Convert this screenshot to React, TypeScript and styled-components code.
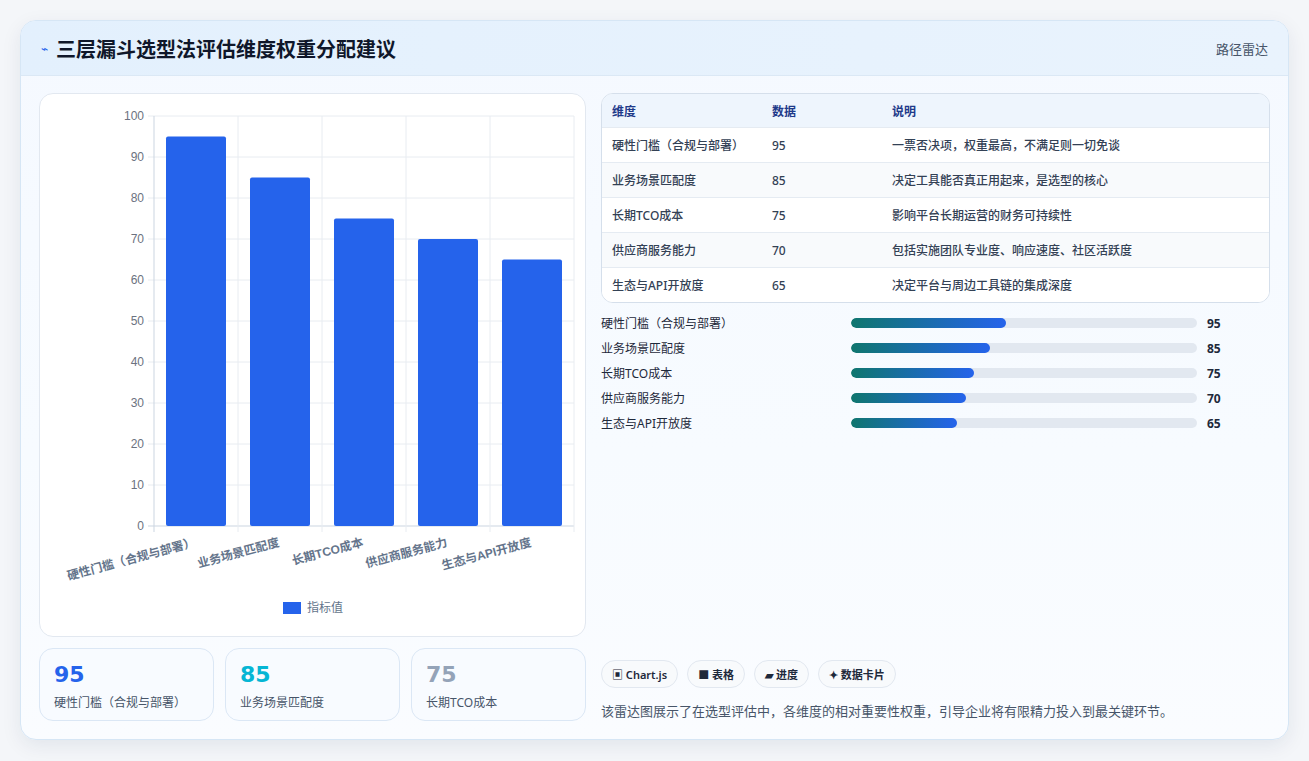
import { createGlobalStyle } from "styled-components";
import styled from "styled-components";

const GlobalStyle = createGlobalStyle`
  html, body { margin: 0; padding: 0; background: #f4f6f9; }
  body { font-family: "Noto Sans", "Noto Sans CJK SC", sans-serif; }
  * { box-sizing: border-box; }
`;

const rows = [
  { name: "硬性门槛（合规与部署）", value: 95, desc: "一票否决项，权重最高，不满足则一切免谈" },
  { name: "业务场景匹配度", value: 85, desc: "决定工具能否真正用起来，是选型的核心" },
  { name: "长期TCO成本", value: 75, desc: "影响平台长期运营的财务可持续性" },
  { name: "供应商服务能力", value: 70, desc: "包括实施团队专业度、响应速度、社区活跃度" },
  { name: "生态与API开放度", value: 65, desc: "决定平台与周边工具链的集成深度" },
];

const Page = styled.div`
  padding: 20px 20px 21px 20px;
  height: 761px;
`;

const Card = styled.div`
  height: 720px;
  border-radius: 16px;
  border: 1px solid #d6e6f5;
  background: linear-gradient(180deg, #f5f9ff 0%, #f7fbff 60%, #fafcff 100%);
  box-shadow: 0 6px 20px rgba(15, 40, 80, 0.08);
  overflow: hidden;
  display: flex;
  flex-direction: column;
`;

const Header = styled.div`
  height: 55px;
  flex: none;
  display: flex;
  align-items: center;
  justify-content: space-between;
  padding: 0 20px;
  background: linear-gradient(90deg, #e3f0fd, #e9f3fd);
  border-bottom: 1px solid #dbe8f5;
`;

const Title = styled.h1`
  margin: 0;
  font-size: 20px;
  font-weight: 700;
  color: #0f172a;
  display: flex;
  align-items: center;
  gap: 8px;
`;

const Bolt = styled.span`
  color: #2563eb;
  font-size: 12px;
  font-weight: 400;
`;

const HeaderRight = styled.span`
  font-size: 13px;
  color: #475569;
`;

const Body = styled.div`
  flex: 1;
  display: grid;
  grid-template-columns: 547px 1fr;
  gap: 15px;
  padding: 17px 18px 18px 18px;
`;

const LeftCol = styled.div`
  display: flex;
  flex-direction: column;
  gap: 11px;
`;

const ChartCard = styled.div`
  height: 544px;
  background: #fff;
  border: 1px solid #e2e8f0;
  border-radius: 14px;
`;

const StatRow = styled.div`
  display: grid;
  grid-template-columns: repeat(3, 1fr);
  gap: 11px;
`;

const StatCard = styled.div`
  height: 73px;
  border: 1px solid #dbe7f5;
  border-radius: 14px;
  background: #f8fbff;
  padding: 12px 14px;
`;

const StatValue = styled.div<{ $color: string }>`
  font-family: "DejaVu Sans", sans-serif;
  font-size: 22px;
  font-weight: 700;
  line-height: 28px;
  color: ${({ $color }) => $color};
`;

const StatLabel = styled.div`
  font-size: 12px;
  color: #475569;
  margin-top: 4px;
`;

const RightCol = styled.div`
  display: flex;
  flex-direction: column;
`;

const Table = styled.div`
  border: 1px solid #d5dfeb;
  border-radius: 12px;
  overflow: hidden;
  background: #fff;
`;

const TRow = styled.div<{ $head?: boolean; $alt?: boolean }>`
  display: grid;
  grid-template-columns: 160px 120px 1fr;
  align-items: center;
  padding: 0 10px;
  height: ${({ $head }) => ($head ? "33px" : "35px")};
  font-size: 12px;
  font-weight: ${({ $head }) => ($head ? 700 : 500)};
  color: ${({ $head }) => ($head ? "#1e3a8a" : "#334155")};
  background: ${({ $head, $alt }) => ($head ? "#eef5fd" : $alt ? "#f8fafc" : "#fff")};
  border-top: ${({ $head }) => ($head ? "none" : "1px solid #e5ebf2")};
`;

const BarList = styled.div`
  display: flex;
  flex-direction: column;
  gap: 7px;
  margin-top: 11px;
`;

const BarRow = styled.div`
  display: grid;
  grid-template-columns: 250px 346px 1fr;
  align-items: center;
  height: 18px;
  font-size: 12px;
  color: #1e293b;
`;

const Track = styled.div`
  height: 10px;
  border-radius: 5px;
  background: #e2e8f0;
  overflow: hidden;
`;

const Fill = styled.div`
  height: 100%;
  border-radius: 5px;
  background: linear-gradient(90deg, #0f766e, #2563eb);
`;

const BarValue = styled.span`
  font-weight: 700;
  padding-left: 10px;
`;

const Spacer = styled.div`
  flex: 1;
`;

const Chips = styled.div`
  display: flex;
  gap: 9px;
`;

const Chip = styled.span`
  height: 28px;
  padding: 0 10px;
  border-radius: 14px;
  border: 1px solid #e2e8f0;
  background: #f8fafc;
  display: inline-flex;
  align-items: center;
  gap: 4px;
  font-size: 11px;
  font-weight: 600;
  color: #1e293b;
`;

const Desc = styled.p`
  margin: 13px 0 1px 0;
  font-size: 13px;
  color: #475569;
`;

const BarChart = () => {
  const x0 = 114;
  const top = 22;
  const bottom = 432;
  const cw = 84;
  const unit = (bottom - top) / 100;
  const ticks = [0, 10, 20, 30, 40, 50, 60, 70, 80, 90, 100];
  return (
    <svg width="545" height="542" fontFamily="Liberation Sans, Noto Sans CJK SC, sans-serif">
      {ticks.map((t) => {
        const y = bottom - t * unit;
        return (
          <g key={t}>
            <line x1={x0 - 6} x2={x0 + cw * 5} y1={y} y2={y} stroke={t === 0 ? "#cbd5e1" : "#e8ecf1"} />
            <text x={x0 - 10} y={y + 4} textAnchor="end" fontSize="12" fill="#6b7280">{t}</text>
          </g>
        );
      })}
      {[0, 1, 2, 3, 4, 5].map((i) => (
        <line key={i} x1={x0 + i * cw} x2={x0 + i * cw} y1={top} y2={bottom + 6} stroke={i === 0 ? "#cbd5e1" : "#e8ecf1"} />
      ))}
      {rows.map((r, i) => {
        const cx = x0 + i * cw + cw / 2;
        const h = r.value * unit;
        return (
          <g key={r.name}>
            <rect x={cx - 30} y={bottom - h} width={60} height={h} rx={2} fill="#2563eb" />
            <text
              x={cx}
              y={bottom + 20}
              textAnchor="end"
              fontSize="12"
              fontWeight="700"
              fill="#64748b"
              transform={`rotate(-15 ${cx} ${bottom + 20})`}
            >
              {r.name}
            </text>
          </g>
        );
      })}
      <rect x={243} y={508} width={18} height={12} fill="#2563eb" />
      <text x={267} y={518} fontSize="12" fill="#64748b">指标值</text>
    </svg>
  );
};

const statColors = ["#2563eb", "#06b6d4", "#94a3b8"];

export default function App() {
  return (
    <>
      <GlobalStyle />
      <Page>
        <Card>
          <Header>
            <Title>
              <Bolt>⌁</Bolt>三层漏斗选型法评估维度权重分配建议
            </Title>
            <HeaderRight>路径雷达</HeaderRight>
          </Header>
          <Body>
            <LeftCol>
              <ChartCard>
                <BarChart />
              </ChartCard>
              <StatRow>
                {rows.slice(0, 3).map((r, i) => (
                  <StatCard key={r.name}>
                    <StatValue $color={statColors[i]}>{r.value}</StatValue>
                    <StatLabel>{r.name}</StatLabel>
                  </StatCard>
                ))}
              </StatRow>
            </LeftCol>
            <RightCol>
              <Table>
                <TRow $head>
                  <span>维度</span>
                  <span>数据</span>
                  <span>说明</span>
                </TRow>
                {rows.map((r, i) => (
                  <TRow key={r.name} $alt={i % 2 === 1}>
                    <span>{r.name}</span>
                    <span>{r.value}</span>
                    <span>{r.desc}</span>
                  </TRow>
                ))}
              </Table>
              <BarList>
                {rows.map((r) => (
                  <BarRow key={r.name}>
                    <span>{r.name}</span>
                    <Track>
                      <Fill style={{ width: `${r.value * 0.473}%` }} />
                    </Track>
                    <BarValue>{r.value}</BarValue>
                  </BarRow>
                ))}
              </BarList>
              <Spacer />
              <Chips>
                <Chip>▣ Chart.js</Chip>
                <Chip>■ 表格</Chip>
                <Chip>▰ 进度</Chip>
                <Chip>✦ 数据卡片</Chip>
              </Chips>
              <Desc>该雷达图展示了在选型评估中，各维度的相对重要性权重，引导企业将有限精力投入到最关键环节。</Desc>
            </RightCol>
          </Body>
        </Card>
      </Page>
    </>
  );
}
